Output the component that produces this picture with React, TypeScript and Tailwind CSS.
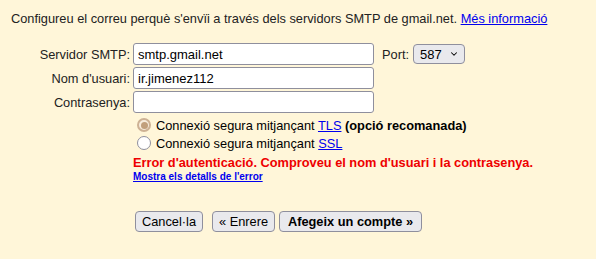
import { ChevronDown } from 'lucide-react';

const INPUT_CLASS =
  'h-[22px] w-[241px] rounded-[3px] border border-[#8f8f9d] bg-white px-[4px] text-[13px] text-black outline-none';

const BUTTON_CLASS =
  'flex h-[21px] items-center justify-center rounded-[4px] border border-[#8f8f9d] bg-[#e9e9ed] text-[12.8px] text-black';

function FieldRow({ label, children }: { label: string; children: React.ReactNode }) {
  return (
    <div className="flex h-[22px] items-center">
      <label className="w-[130px] text-right leading-[15px]">{label}</label>
      <div className="ml-[3px] flex items-center">{children}</div>
    </div>
  );
}

function Radio({ checked }: { checked: boolean }) {
  if (checked) {
    return (
      <span className="flex h-[14px] w-[14px] items-center justify-center rounded-full border-2 border-[#cdb194] bg-[#f7ecdc]">
        <span className="h-[7px] w-[7px] rounded-full bg-[#c19f7c]" />
      </span>
    );
  }
  return <span className="h-[14px] w-[14px] rounded-full border border-[#8f8f9d] bg-white" />;
}

export default function App() {
  return (
    <div className="h-[259px] w-[596px] overflow-hidden bg-[#fff6d9] font-['Liberation_Sans',Arial,sans-serif] text-[12.8px] text-[#222]">
      <p className="pl-[11px] pt-[11px] leading-[15px]">
        Configureu el correu perquè s'envïi a través dels servidors SMTP de gmail.net.{' '}
        <a href="#" className="text-[#0000ee] underline">
          Més informació
        </a>
      </p>

      <div className="mt-[17px] flex flex-col gap-[2px]">
        <FieldRow label="Servidor SMTP:">
          <input className={INPUT_CLASS} defaultValue="smtp.gmail.net" />
          <span className="ml-[8px] leading-[15px]">Port:</span>
          <div className="ml-[4px] flex h-[20px] w-[52px] items-center justify-between rounded-[4px] border border-[#8f8f9d] bg-[#e9e9ed] pl-[6px] pr-[5px] text-[13px] text-black">
            <span className="leading-[15px]">587</span>
            <ChevronDown className="h-[10px] w-[10px]" strokeWidth={2.5} />
          </div>
        </FieldRow>
        <FieldRow label="Nom d'usuari:">
          <input className={INPUT_CLASS} defaultValue="ir.jimenez112" />
        </FieldRow>
        <FieldRow label="Contrasenya:">
          <input className={INPUT_CLASS} type="password" />
        </FieldRow>
      </div>

      <div className="ml-[137px] mt-[3px] flex flex-col">
        <div className="flex h-[18px] items-center gap-[5px]">
          <Radio checked />
          <span className="leading-[15px] text-black">
            Connexió segura mitjançant{' '}
            <a href="#" className="text-[#0000ee] underline">
              TLS
            </a>{' '}
            <b>(opció recomanada)</b>
          </span>
        </div>
        <div className="flex h-[18px] items-center gap-[5px]">
          <Radio checked={false} />
          <span className="leading-[15px] text-black">
            Connexió segura mitjançant{' '}
            <a href="#" className="text-[#0000ee] underline">
              SSL
            </a>
          </span>
        </div>
      </div>

      <div className="ml-[133px] mt-[3px]">
        <div className="font-bold leading-[15px] text-[#ee0000]">
          Error d'autenticació. Comproveu el nom d'usuari i la contrasenya.
        </div>
        <a href="#" className="mt-[1px] block text-[10px] font-bold leading-[12px] text-[#0000ee] underline">
          Mostra els detalls de l'error
        </a>
      </div>

      <div className="ml-[135px] mt-[28px] flex items-center">
        <button className={`${BUTTON_CLASS} w-[68px]`}>Cancel·la</button>
        <button className={`${BUTTON_CLASS} ml-[9px] w-[63px]`}>« Enrere</button>
        <button className={`${BUTTON_CLASS} ml-[4px] w-[143px] font-bold`}>Afegeix un compte »</button>
      </div>
    </div>
  );
}
